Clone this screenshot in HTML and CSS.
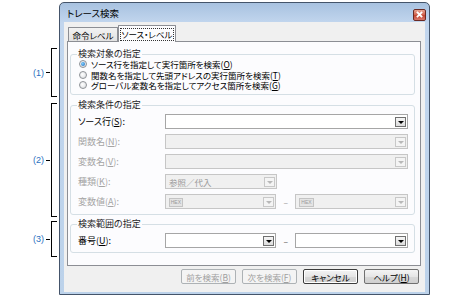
FILE: index.html
```html
<!DOCTYPE html>
<html lang="ja">
<head>
<meta charset="utf-8">
<link rel="stylesheet" href="styles.css">
</head>
<body>
<div class="page">
  <div class="annots">
    <div class="brace b1"><span class="num">(<b>1</b>)</span><span class="tick"></span><span class="bracket"></span></div>
    <div class="brace b2"><span class="num">(<b>2</b>)</span><span class="tick"></span><span class="bracket"></span></div>
    <div class="brace b3"><span class="num">(<b>3</b>)</span><span class="tick"></span><span class="bracket"></span></div>
  </div>
  <div class="window">
    <div class="titlebar">
      <span class="title">トレース検索</span>
      <span class="close"><svg width="11" height="10" viewBox="0 0 11 10"><path d="M3.5 2.5 L7.5 6.5 M7.5 2.5 L3.5 6.5" stroke="#fff" stroke-width="1.8" stroke-linecap="square"/></svg></span>
    </div>
    <div class="client">
      <div class="tabs">
        <div class="tab">命令レベル</div>
        <div class="tab active"><span class="focus">ソース・レベル</span></div>
      </div>
      <div class="panel">
        <div class="group g1">
          <div class="legend">検索対象の指定</div>
          <div class="radio-row"><span class="radio on"></span><span>ソース行を指定して実行箇所を検索(<u>O</u>)</span></div>
          <div class="radio-row"><span class="radio"></span><span>関数名を指定して先頭アドレスの実行箇所を検索(<u>T</u>)</span></div>
          <div class="radio-row"><span class="radio"></span><span>グローバル変数名を指定してアクセス箇所を検索(<u>G</u>)</span></div>
        </div>
        <div class="group g2">
          <div class="legend">検索条件の指定</div>
          <div class="field">
            <span class="label">ソース行(<u>S</u>):</span>
            <span class="combo wide"><span class="value"></span><span class="drop"></span></span>
          </div>
          <div class="field disabled">
            <span class="label">関数名(<u>N</u>):</span>
            <span class="combo wide"><span class="value"></span><span class="drop"></span></span>
          </div>
          <div class="field disabled">
            <span class="label">変数名(<u>V</u>):</span>
            <span class="combo wide"><span class="value"></span><span class="drop"></span></span>
          </div>
          <div class="field disabled">
            <span class="label">種類(<u>K</u>):</span>
            <span class="combo short"><span class="value">参照／代入</span><span class="drop"></span></span>
          </div>
          <div class="field disabled">
            <span class="label">変数値(<u>A</u>):</span>
            <span class="combo short"><span class="value"><span class="hex">HEX</span></span><span class="drop"></span></span>
            <span class="dash">–</span>
            <span class="combo short2"><span class="value"><span class="hex">HEX</span></span><span class="drop"></span></span>
          </div>
        </div>
        <div class="group g3">
          <div class="legend">検索範囲の指定</div>
          <div class="field">
            <span class="label">番号(<u>U</u>):</span>
            <span class="combo short"><span class="value"></span><span class="drop"></span></span>
            <span class="dash">–</span>
            <span class="combo short2"><span class="value"></span><span class="drop"></span></span>
          </div>
        </div>
      </div>
      <div class="buttons">
        <span class="btn disabled">前を検索(<u>B</u>)</span>
        <span class="btn disabled">次を検索(<u>F</u>)</span>
        <span class="btn default">キャンセル</span>
        <span class="btn">ヘルプ(<u>H</u>)</span>
      </div>
    </div>
  </div>
</div>
</body>
</html>
```
FILE: styles.css
```css
* { box-sizing: border-box; }
html, body { margin: 0; padding: 0; background: #fff; }
body {
  width: 473px; height: 300px; overflow: hidden;
  font-family: "Noto Sans CJK JP", "Noto Sans", sans-serif;
  font-size: 8.5px;
  line-height: 10px;
  font-feature-settings: "palt";
  color: #000;
}
u { text-decoration: underline; text-underline-offset: 1px; }
.page { display: flex; padding-top: 2px; }

/* annotations */
.annots { width: 59px; padding-top: 46px; display: flex; flex-direction: column; }
.brace { display: flex; align-items: center; width: 57px; }
.b1 { height: 49px; }
.b2 { height: 114px; margin-top: 6px; }
.b3 { height: 36px; margin-top: 4px; }
.num {
  width: 44px; text-align: right; font-family: "Liberation Sans", Arial, sans-serif;
  font-size: 9px; color: #2a6fc0;
}
.num b { font-weight: normal; color: #2a6fc0; }
.tick { width: 4px; height: 1px; background: #000; margin-left: 2px; }
.bracket {
  width: 6px; height: 100%; margin-left: 1px;
  border: 1px solid #000; border-right: none;
}

/* window */
.window {
  width: 371px; height: 293px;
  border: 1px solid #44546a;
  border-radius: 5px 5px 0 0;
  background: linear-gradient(#a8c2e0 0, #c2d6ee 20px, #bcd2ea 100%);
  display: flex; flex-direction: column;
}
.titlebar {
  height: 19px; flex: none; display: flex; align-items: center; justify-content: space-between;
  padding: 0 3px 0 7px;
}
.title { font-size: 9.5px; color: #000; }
.close {
  width: 13px; height: 12px; border: 1px solid #6b2a24; border-radius: 2px;
  background: linear-gradient(#e8a493, #d0604a 50%, #c24530 51%, #d9776a);
  display: flex; margin-top: 4px;
}
.client {
  margin: 0 4px 2px 4px; flex: 1;
  background: #f0f0f0;
  padding: 3px 4px 0 3px;
  display: flex; flex-direction: column;
}
.tabs { display: flex; height: 16px; flex: none; align-items: flex-end; position: relative; z-index: 1; }
.tab {
  height: 14px; margin-left: 1px; width: 50px; white-space: nowrap;
  border: 1px solid #8c8e94; border-bottom: none;
  background: linear-gradient(#f2f2f2, #e2e2e2);
  display: flex; align-items: center; justify-content: center;
  border-radius: 1px 1px 0 0;
}
.tab.active {
  height: 17px; width: 58px; margin-left: 0; margin-bottom: -1px;
  background: #fcfcfe;
}
.focus { border: 1px dotted #333; padding: 0 1px; line-height: 11px; }

.panel {
  height: 225px; flex: none; border: 1px solid #8c8e94; background: #fcfcfe;
  padding: 12px 5px 0 2px;
}
.group {
  border: 1px solid #d5dfe5; border-radius: 3px;
  padding: 0 6px 0 6px;
}
.legend {
  display: block; width: fit-content; background: #fcfcfe; padding: 0 1px;
  font-size: 9px;
  line-height: 12px; height: 12px; margin-top: -7px;
  color: #1e1e1e;
}
.g1 { height: 41px; }
.g1 .legend { margin-bottom: -1px; }
.radio-row { display: flex; align-items: center; height: 10.4px; line-height: 10px; white-space: nowrap; }
.radio {
  width: 8px; height: 8px; border-radius: 50%; border: 1px solid #8f9297;
  background: radial-gradient(circle at 40% 40%, #fff, #d8dade);
  margin: 0 4px 0 2px; flex: none; position: relative;
}
.radio.on::after {
  content: ""; position: absolute; left: 1px; top: 1px; width: 4px; height: 4px; border-radius: 50%;
  background: radial-gradient(circle at 40% 40%, #7fd0ff, #1a63b8);
}
.g2 { height: 110px; margin-top: 10px; }
.g2 .legend { margin-bottom: 3px; }
.g3 { height: 29px; margin-top: 9px; }
.g3 .legend { margin-bottom: 3px; }
.field { display: flex; align-items: center; height: 15px; margin-bottom: 5px; white-space: nowrap; }
.label { width: 88px; font-size: 9px; padding-left: 1px; }
.disabled .label { color: #a4a4a4; }
.combo {
  height: 15px; border: 1px solid #a6a6a6; background: #fff;
  display: flex; align-items: center; justify-content: space-between;
  padding: 0 1px 0 3px;
}
.disabled .combo { background: #f0f0f0; border-color: #c6c6c6; color: #9a9a9a; }
.wide { width: 244px; }
.short { width: 112px; }
.short2 { width: 113px; }
.dash { width: 19px; text-align: center; color: #555; }
.disabled .dash { color: #999; }
.drop {
  width: 11px; height: 10px; border: 1px solid #707070;
  background: linear-gradient(#f6f6f6, #dcdcdc);
  position: relative; flex: none;
}
.drop::after {
  content: ""; position: absolute; left: 2px; top: 3px;
  border-left: 3px solid transparent; border-right: 3px solid transparent; border-top: 3px solid #000;
}
.disabled .drop { border-color: #c8c8c8; background: #f4f4f4; }
.disabled .drop::after { border-top-color: #b8b8b8; }
.hex {
  display: inline-block; font-family: "Liberation Sans", sans-serif; font-size: 5px; line-height: 7px;
  border: 1px solid #c4c4c4; background: #e4e4e4; color: #9a9a9a; padding: 0 1px; vertical-align: middle;
}
.buttons { display: flex; justify-content: flex-end; gap: 6px; margin-top: 3px; padding-right: 2px; }
.btn {
  width: 55px; height: 15px; border: 1px solid #707070; border-radius: 2px;
  background: linear-gradient(#f4f4f4, #e6e6e6 50%, #d8d8d8 51%, #d0d0d0);
  display: flex; align-items: center; justify-content: center; line-height: 10px;
}
.btn.default { border-color: #3c3c3c; box-shadow: inset 0 0 0 1px #fff; }
.btn.disabled { border-color: #adb2b5; background: #f4f4f4; color: #a0a0a0; }
```
